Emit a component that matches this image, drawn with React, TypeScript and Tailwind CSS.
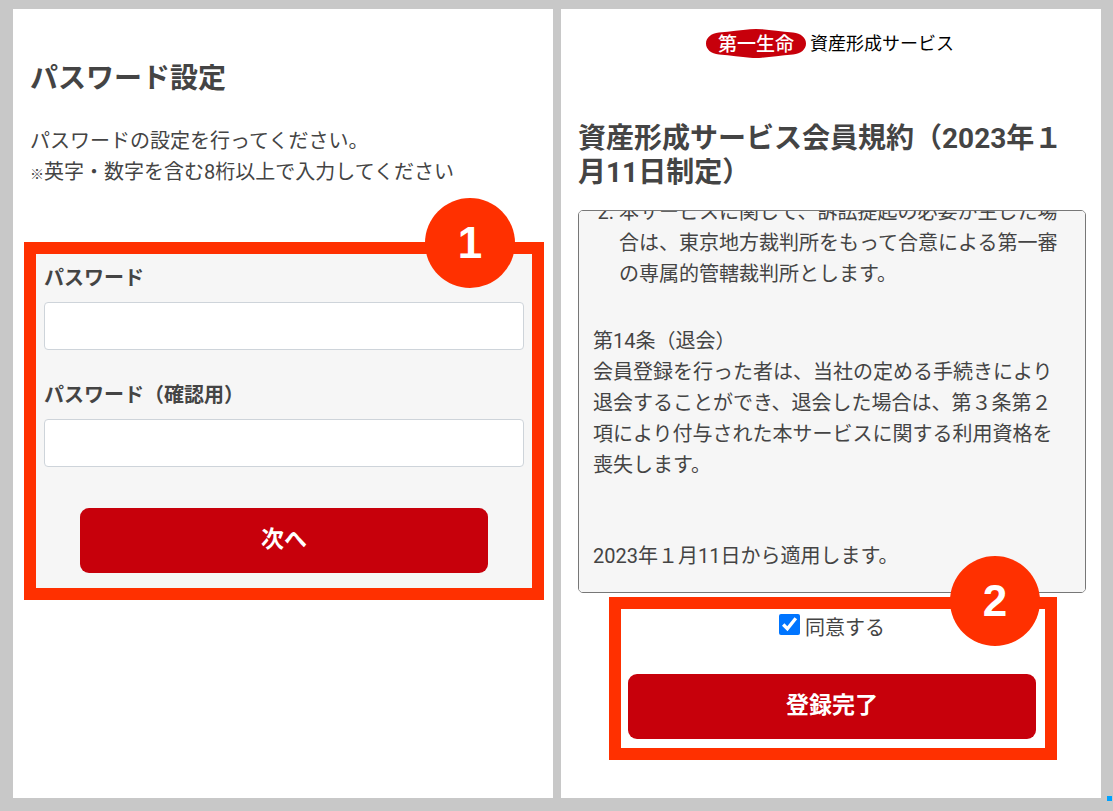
import { useLayoutEffect, useRef, useState } from "react";
import type { FormEvent, ReactNode } from "react";

function StepFrame({
  step,
  className,
  badgeClassName,
  children,
}: {
  step: number;
  className: string;
  badgeClassName: string;
  children: ReactNode;
}) {
  return (
    <div className={`relative border-12 border-[#ff3000] ${className}`}>
      {children}
      <span
        className={`absolute flex size-[90px] items-center justify-center rounded-full bg-[#ff3000] font-['Liberation_Sans',sans-serif] text-[44px] leading-none font-bold text-white ${badgeClassName}`}
      >
        {step}
      </span>
    </div>
  );
}

function PasswordField({ id, label }: { id: string; label: string }) {
  return (
    <div className="flex flex-col gap-2">
      <label htmlFor={id} className="font-bold">
        {label}
      </label>
      <input
        id={id}
        type="password"
        className="h-12 w-full rounded border border-[#ced4da] bg-white px-3"
      />
    </div>
  );
}

function SubmitButton({ children }: { children: ReactNode }) {
  return (
    <button
      type="submit"
      className="h-[65px] w-full rounded-[9px] bg-[#c7000b] pb-0.5 text-[23px] font-bold text-white"
    >
      {children}
    </button>
  );
}

function Logo() {
  return (
    <div className="mr-1 flex items-center justify-center gap-1 text-[18px] leading-[29px] text-black">
      <svg width="100" height="29" viewBox="0 0 100 29" aria-label="第一生命">
        <path
          d="M13 3.5C25 2.5 35 1 44 .3Q50 -.2 56 .3C65 1 75 2.5 87 3.5C95 4.5 100 8.500 100 14.500S95 24.500 87 25.500C75 26.500 65 28 56 28.700Q50 29.200 44 28.700C35 28 25 26.500 13 25.500C5 24.500 0 20.500 0 14.500S5 4.500 13 3.500Z"
          fill="#c7000b"
        />
        <text
          x="50"
          y="22"
          textAnchor="middle"
          fill="#fff"
          fontSize="19"
          fontWeight="500"
        >
          第一生命
        </text>
      </svg>
      <span>資産形成サービス</span>
    </div>
  );
}

function PasswordPanel() {
  const handleSubmit = (e: FormEvent) => e.preventDefault();

  return (
    <section className="bg-white pt-[53px]">
      <div className="px-[17px]">
        <h1 className="text-[28px] leading-[34px] font-bold">パスワード設定</h1>
        <p className="mt-[30px]">
          パスワードの設定を行ってください。
          <br />
          <span className="text-sm">※</span>
          英字・数字を含む8桁以上で入力してください
        </p>
      </div>

      <StepFrame
        step={1}
        className="mt-[54px] mr-[9px] ml-[11px]"
        badgeClassName="-top-14 right-[17px]"
      >
        <form
          onSubmit={handleSubmit}
          className="flex flex-col gap-[30px] bg-[#f6f6f6] px-2 pt-[9px] pb-[15px]"
        >
          <PasswordField id="password" label="パスワード" />
          <PasswordField id="password-confirm" label="パスワード（確認用）" />
          <div className="px-9 pt-[11px]">
            <SubmitButton>次へ</SubmitButton>
          </div>
        </form>
      </StepFrame>
    </section>
  );
}

function TermsPanel() {
  const [agreed, setAgreed] = useState(true);
  const termsRef = useRef<HTMLDivElement>(null);

  // Open the terms at their last article
  useLayoutEffect(() => {
    if (termsRef.current) {
      termsRef.current.scrollTop = termsRef.current.scrollHeight;
    }
  }, []);

  const handleSubmit = (e: FormEvent) => e.preventDefault();

  return (
    <section className="bg-white pt-5 pr-[15px] pl-[17px]">
      <Logo />
      <h2 className="mt-16 text-[28px] leading-[34px] font-bold">
        資産形成サービス会員規約（2023年１月11日制定）
      </h2>

      <div
        ref={termsRef}
        className="mt-5 h-[383px] overflow-y-auto rounded-[5px] border border-[#777] bg-[#f6f6f6] px-[14px] pb-5 [scrollbar-width:none]"
      >
        <ol start={2} className="list-decimal pl-[26px]">
          <li>
            本サービスに関して、訴訟提起の必要が生じた場合は、東京地方裁判所をもって合意による第一審の専属的管轄裁判所とします。
          </li>
        </ol>
        <h3 className="mt-9">第14条（退会）</h3>
        <p>
          会員登録を行った者は、当社の定める手続きにより退会することができ、退会した場合は、第３条第２項により付与された本サービスに関する利用資格を喪失します。
        </p>
        <p className="mt-[60px]">2023年１月11日から適用します。</p>
      </div>

      <StepFrame
        step={2}
        className="mt-1 mr-[29px] ml-[31px]"
        badgeClassName="-top-[53px] right-[5px]"
      >
        <form
          onSubmit={handleSubmit}
          className="pt-1 pr-[9px] pb-[9px] pl-[7px]"
        >
          <div className="flex items-start justify-center gap-[5px]">
            <input
              id="agree"
              type="checkbox"
              checked={agreed}
              onChange={(e) => setAgreed(e.target.checked)}
              className="mt-px size-[21px] accent-[#0075ff]"
            />
            <label htmlFor="agree">同意する</label>
          </div>
          <div className="mt-[30px]">
            <SubmitButton>登録完了</SubmitButton>
          </div>
        </form>
      </StepFrame>
    </section>
  );
}

function App() {
  return (
    <main className="relative grid min-h-screen grid-cols-2 gap-2 bg-[#c8c8c8] pt-[9px] pr-3 pb-[13px] pl-[13px] font-[Roboto,'Noto_Sans_CJK_JP',sans-serif] text-[20px] leading-[31px] text-[#444]">
      <PasswordPanel />
      <TermsPanel />
      <span className="absolute right-px bottom-[10px] size-[5px] bg-[#00a2ff]" />
    </main>
  );
}

export default App;
